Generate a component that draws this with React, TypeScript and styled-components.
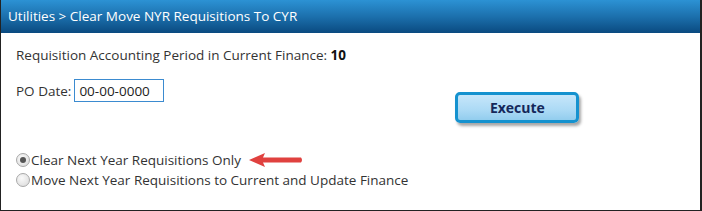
import React from 'react'
import styled, { createGlobalStyle } from 'styled-components'

const Global = createGlobalStyle`
  html, body { margin: 0; padding: 0; background: #fff; }
  body { font-family: "Open Sans", "Liberation Sans", sans-serif; }
`

const Panel = styled.div`
  width: 702px;
  height: 211px;
  box-sizing: border-box;
  border: 1px solid #222;
  border-top: none;
  border-right-width: 2px;
  display: flex;
  flex-direction: column;
  background: #fff;
`

const Header = styled.div`
  height: 33px;
  flex-shrink: 0;
  display: flex;
  align-items: center;
  padding-left: 7px;
  padding-bottom: 2px;
  box-sizing: border-box;
  background: linear-gradient(to bottom, #2c92d4 0%, #1c70ad 50%, #0a4a80 100%);
  color: #fff;
  font-size: 13.5px;
`

const Body = styled.div`
  display: flex;
  flex-direction: column;
  padding: 12px 0 0 15px;
  color: #333;
  font-size: 13.5px;
`

const Line = styled.div`
  line-height: 20px;
  b { font-weight: 700; color: #111; }
`

const Middle = styled.div`
  display: flex;
  align-items: flex-start;
  margin-top: 14px;
`

const Field = styled.label`
  display: flex;
  align-items: center;
  gap: 3px;
  line-height: 20px;
`

const DateInput = styled.div`
  width: 84px;
  height: 21px;
  border: 1px solid #3b8bd0;
  box-sizing: content-box;
  padding-left: 4px;
  display: flex;
  align-items: center;
  color: #222;
`

const Button = styled.button`
  margin: 13px 0 0 291px;
  width: 124px;
  height: 31px;
  border: 3px solid #1592cf;
  border-radius: 5px;
  background: linear-gradient(to bottom, #c6e6fa 0%, #acdaf5 60%, #92cdee 100%);
  box-shadow: 2px 3px 3px rgba(0, 0, 0, 0.35);
  color: #14285a;
  font-family: inherit;
  font-size: 14px;
  font-weight: 700;
  padding: 0;
`

const Options = styled.div`
  display: flex;
  flex-direction: column;
  margin-top: 27px;
`

const Option = styled.div`
  display: flex;
  align-items: center;
  height: 20px;
`

const Radio = styled.span<{ $checked?: boolean }>`
  width: 12px;
  height: 12px;
  border-radius: 50%;
  border: 1px solid #a8a8a8;
  background: radial-gradient(circle at 40% 35%, #fafafa 0%, #d8d8d8 100%);
  margin-right: 1px;
  display: flex;
  align-items: center;
  justify-content: center;
  &::after {
    content: '';
    width: 6px;
    height: 6px;
    border-radius: 50%;
    background: #555;
    display: ${p => (p.$checked ? 'block' : 'none')};
  }
`

const Arrow = () => (
  <svg width="56" height="16" viewBox="0 0 56 16" style={{ marginLeft: 7 }}>
    <path d="M1 8 L17 1 L15 5.5 L53 5.5 Q55 8 53 10.5 L15 10.5 L17 15 Z" fill="#e0413f" />
  </svg>
)

const App = () => {
  return (
    <>
      <Global />
      <Panel>
        <Header>Utilities &gt; Clear Move NYR Requisitions To CYR</Header>
        <Body>
          <Line>
            Requisition Accounting Period in Current Finance: <b>10</b>
          </Line>
          <Middle>
            <Field>
              PO Date:
              <DateInput>00-00-0000</DateInput>
            </Field>
            <Button>Execute</Button>
          </Middle>
          <Options>
            <Option>
              <Radio $checked />
              Clear Next Year Requisitions Only
              <Arrow />
            </Option>
            <Option>
              <Radio />
              Move Next Year Requisitions to Current and Update Finance
            </Option>
          </Options>
        </Body>
      </Panel>
    </>
  )
}

export default App
